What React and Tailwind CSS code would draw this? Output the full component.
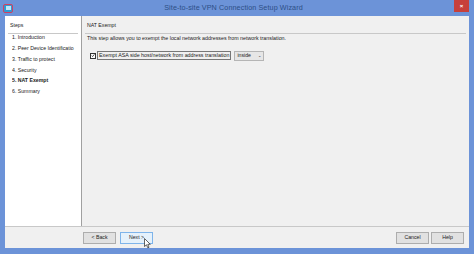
const steps = [
  '1. Introduction',
  '2. Peer Device Identificatio',
  '3. Traffic to protect',
  '4. Security',
  '5. NAT Exempt',
  '6. Summary',
]

function Btn({ children, hot }) {
  return (
    <div
      className={`w-[33px] h-[12px] flex items-center justify-center border text-[5.2px] ${
        hot ? 'border-[#7eb4ea] bg-[#e5f1fb]' : 'border-[#adadad] bg-[#e1e1e1]'
      }`}
    >
      {children}
    </div>
  )
}

export default function App() {
  return (
    <div
      className="w-[474px] h-[254px] bg-[#6c93d8] flex flex-col overflow-hidden text-[#1a1a1a]"
      style={{ fontFamily: '"Liberation Sans", Arial, sans-serif' }}
    >
      {/* title bar */}
      <div className="h-[16px] flex items-center relative shrink-0">
        <div className="ml-[3px] w-[10px] h-[9px] rounded-[2px] bg-[#2f9bd3] border border-[#d04060] flex items-center justify-center">
          <div className="w-[5px] h-[4px] bg-[#bfe6f7]" />
        </div>
        <div className="flex-1 text-center text-[7.2px] text-[#2c4f86] tracking-[0.1px]">
          Site-to-site VPN Connection Setup Wizard
        </div>
        <div className="w-[15px] h-[12px] self-start bg-[#c7403b] mr-[5px] flex items-center justify-center text-white text-[6px] font-bold">
          ×
        </div>
      </div>

      {/* client area */}
      <div className="flex-1 mx-[5px] mb-[6px] bg-[#f0f0f0] flex flex-col">
        <div className="h-[211px] flex border-b border-[#c8c8c8]">
          <div className="w-[77px] bg-white border-r border-[#a0a0a0] px-[3px] pt-[6px]">
            <div className="text-[5.2px] pl-[2px] pb-[3px] border-b border-[#c8c8c8]">Steps</div>
            <div className="pl-[4px] -mt-[1px] flex flex-col">
              {steps.map((s, i) => (
                <div
                  key={s}
                  className={`h-[10.8px] flex items-center text-[5.2px] whitespace-nowrap overflow-hidden ${
                    i === 4 ? 'font-bold' : ''
                  }`}
                >
                  {s}
                </div>
              ))}
            </div>
          </div>
          <div className="flex-1 px-[3px] pt-[6px]">
            <div className="text-[5.2px] pl-[2px] pb-[3px] border-b border-[#c8c8c8]">NAT Exempt</div>
            <div className="text-[5.3px] pl-[2px] pt-[1px]">
              This step allows you to exempt the local network addresses from network translation.
            </div>
            <div className="flex items-center pl-[5px] mt-[8px]">
              <div className="w-[6px] h-[6px] border border-[#333] bg-white flex items-center justify-center">
                <svg width="5" height="5" viewBox="0 0 5 5">
                  <path d="M0.8 2.6 L2 3.8 L4.2 1" fill="none" stroke="#111" strokeWidth="0.9" />
                </svg>
              </div>
              <div className="ml-[1px] border border-[#777] px-[1px] h-[9px] flex items-center text-[5.3px] whitespace-nowrap">
                Exempt ASA side host/network from address translation
              </div>
              <div className="ml-[3px] w-[30px] h-[10px] border border-[#b5b5b5] bg-[#e6e6e6] flex items-center justify-between px-[2px] text-[5.2px]">
                <span>inside</span>
                <span className="text-[4px]">⌄</span>
              </div>
            </div>
          </div>
        </div>

        <div className="flex-1 flex items-center pl-[78px] pr-[5px]">
          <div className="flex gap-[4px]">
            <Btn>&lt; Back</Btn>
            <div className="relative">
              <Btn hot>Next &gt;</Btn>
              <svg className="absolute left-[24px] top-[6px]" width="7" height="11" viewBox="0 0 7 11">
                <path d="M0.5 0.5 L0.5 8.5 L2.5 6.8 L3.8 9.8 L5 9.3 L3.8 6.3 L6.3 6.3 Z" fill="white" stroke="#222" strokeWidth="0.7" />
              </svg>
            </div>
          </div>
          <div className="ml-auto flex gap-[2px]">
            <Btn>Cancel</Btn>
            <Btn>Help</Btn>
          </div>
        </div>
      </div>
    </div>
  )
}
